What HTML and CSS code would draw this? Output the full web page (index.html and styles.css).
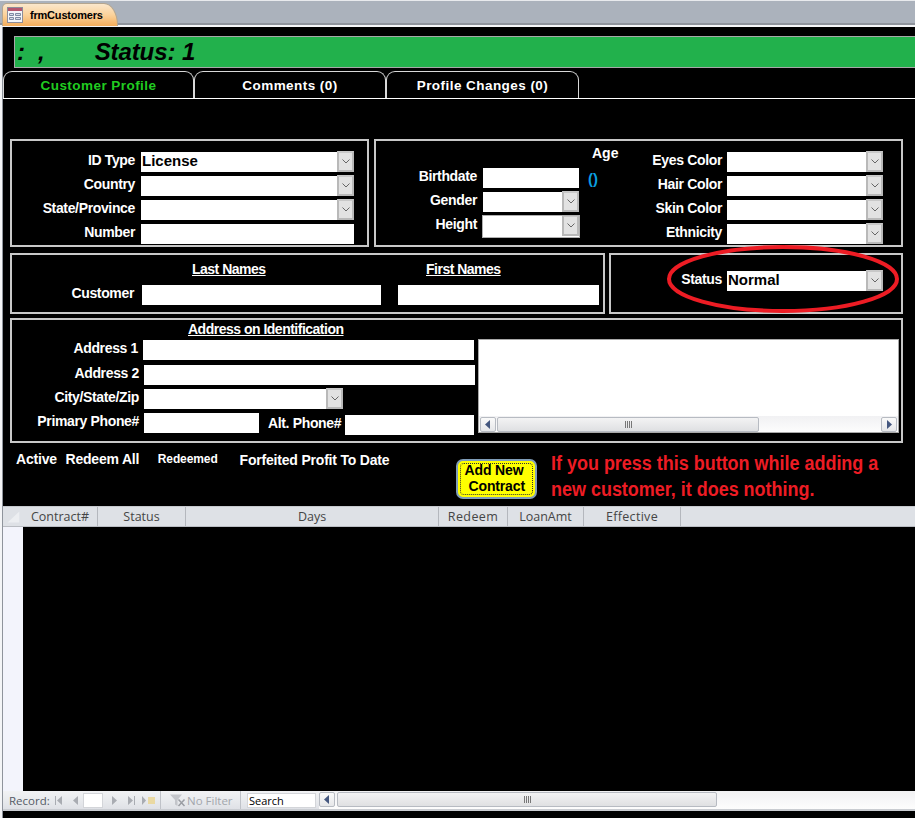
FILE: index.html
```html
<!DOCTYPE html>
<html lang="en">
<head>
<meta charset="utf-8">
<title>frmCustomers</title>
<link rel="stylesheet" href="styles.css">
</head>
<body>
<div class="doc-bar">
  <div class="doc-tab">
    <svg class="doc-icon" viewBox="0 0 16 16"><rect x=".5" y=".5" width="15" height="15" fill="#f4f6fa" stroke="#8d8d9a"/><rect x="1" y="1" width="14" height="3" fill="#b4566e"/><path d="M2.500 6.500h4v2h-4zM2.500 10.500h4v2h-4zM8.500 6.500h5v2h-5zM8.500 10.500h5v2h-5z" fill="#d7dde8" stroke="#7d8ba3"/></svg>
    <span>frmCustomers</span>
  </div>
</div>
<main class="form">
  <div class="title-bar"><span>:</span><span class="title-comma">,</span><span class="title-status">Status: 1</span></div>
  <nav class="tabs">
    <div class="tab tab-active">Customer Profile</div>
    <div class="tab">Comments (0)</div>
    <div class="tab tab-last">Profile Changes (0)</div>
  </nav>

  <div class="panel-row row-one">
    <section class="panel panel-id">
      <div class="field"><label class="lbl w-id">ID Type</label><div class="combo w-idc"><span class="val">License</span><i class="drop"><svg viewBox="0 0 8 5"><path d="M.5.500l3.500 3.500 3.500-3.500"/></svg></i></div></div>
      <div class="field"><label class="lbl w-id">Country</label><div class="combo w-idc"><span class="val"></span><i class="drop"><svg viewBox="0 0 8 5"><path d="M.5.500l3.500 3.500 3.500-3.500"/></svg></i></div></div>
      <div class="field"><label class="lbl w-id">State/Province</label><div class="combo w-idc"><span class="val"></span><i class="drop"><svg viewBox="0 0 8 5"><path d="M.5.500l3.500 3.500 3.500-3.500"/></svg></i></div></div>
      <div class="field"><label class="lbl w-id">Number</label><div class="box w-idc"></div></div>
    </section>
    <section class="panel panel-bio">
      <div class="bio-col">
        <div class="field"><label class="lbl w-bio">Birthdate</label><div class="box w-bioc"></div></div>
        <div class="field"><label class="lbl w-bio">Gender</label><div class="combo w-bioc"><span class="val"></span><i class="drop"><svg viewBox="0 0 8 5"><path d="M.5.500l3.500 3.500 3.500-3.500"/></svg></i></div></div>
        <div class="field"><label class="lbl w-bio">Height</label><div class="combo w-bioc combo-focus"><span class="val"></span><i class="drop"><svg viewBox="0 0 8 5"><path d="M.5.500l3.500 3.500 3.500-3.500"/></svg></i></div></div>
      </div>
      <div class="age-col">
        <div class="age">Age</div>
        <div class="parens">()</div>
      </div>
      <div class="look-col">
        <div class="field"><label class="lbl w-look">Eyes Color</label><div class="combo w-lookc"><span class="val"></span><i class="drop"><svg viewBox="0 0 8 5"><path d="M.5.500l3.500 3.500 3.500-3.500"/></svg></i></div></div>
        <div class="field"><label class="lbl w-look">Hair Color</label><div class="combo w-lookc"><span class="val"></span><i class="drop"><svg viewBox="0 0 8 5"><path d="M.5.500l3.500 3.500 3.500-3.500"/></svg></i></div></div>
        <div class="field"><label class="lbl w-look">Skin Color</label><div class="combo w-lookc"><span class="val"></span><i class="drop"><svg viewBox="0 0 8 5"><path d="M.5.500l3.500 3.500 3.500-3.500"/></svg></i></div></div>
        <div class="field"><label class="lbl w-look">Ethnicity</label><div class="combo w-lookc"><span class="val"></span><i class="drop"><svg viewBox="0 0 8 5"><path d="M.5.500l3.500 3.500 3.500-3.500"/></svg></i></div></div>
      </div>
    </section>
  </div>

  <div class="panel-row row-two">
    <section class="panel panel-name">
      <div class="name-grid">
        <span></span>
        <h3 class="head head-last">Last Names</h3>
        <h3 class="head head-first">First Names</h3>
        <label class="lbl">Customer</label>
        <div class="box"></div>
        <div class="box"></div>
      </div>
    </section>
    <section class="panel panel-status">
      <div class="field"><label class="lbl w-status">Status</label><div class="combo w-lookc"><span class="val">Normal</span><i class="drop"><svg viewBox="0 0 8 5"><path d="M.5.500l3.500 3.500 3.500-3.500"/></svg></i></div></div>
      <svg class="ring" viewBox="0 0 236 72"><ellipse cx="117" cy="34" rx="114" ry="32"/></svg>
    </section>
  </div>

  <section class="panel panel-address">
    <div class="addr-left">
      <h3 class="head head-addr">Address on Identification</h3>
      <div class="field addr-1"><label class="lbl w-addr1">Address 1</label><div class="box w-addrc"></div></div>
      <div class="field addr-2"><label class="lbl w-addr2">Address 2</label><div class="box w-addrc"></div></div>
      <div class="field addr-3"><label class="lbl w-addr2">City/State/Zip</label><div class="combo w-city"><span class="val"></span><i class="drop"><svg viewBox="0 0 8 5"><path d="M.5.500l3.500 3.500 3.500-3.500"/></svg></i></div></div>
      <div class="field addr-4">
        <label class="lbl w-addr2">Primary Phone#</label><div class="box w-phone"></div>
        <label class="lbl alt-lbl">Alt. Phone#</label><div class="box w-alt"></div>
      </div>
    </div>
    <div class="memo">
      <div class="memo-body"></div>
      <div class="hscroll memo-scroll">
        <i class="sb-btn"><svg viewBox="0 0 6 9"><path d="M5 0v9L0 4.500z"/></svg></i>
        <div class="sb-thumb memo-thumb"><svg viewBox="0 0 7 7"><path d="M.5 0v7M2.500 0v7M4.500 0v7M6.500 0v7"/></svg></div>
        <span class="sb-track"></span>
        <i class="sb-btn"><svg viewBox="0 0 6 9"><path d="M1 0v9l5-4.500z"/></svg></i>
      </div>
    </div>
  </section>

  <div class="action-row">
    <div class="stat-active">Active</div>
    <div class="stat-redeem">Redeem All</div>
    <div class="stat-redeemed">Redeemed</div>
    <div class="stat-forfeit">Forfeited</div>
    <div class="stat-profit">Profit To Date</div>
    <button class="add-btn"><span class="add-inner"><span class="add-l1">Add New</span><span class="add-l2">Contract</span></span></button>
    <p class="warning">If you press this button while adding a<br>new customer, it does nothing.</p>
  </div>

  <section class="sheet">
    <div class="sheet-head">
      <div class="sel-corner"><svg viewBox="0 0 20 21"><path d="M4 17L17 5v12z"/></svg></div>
      <div class="col c-contract">Contract#</div>
      <div class="col c-status">Status</div>
      <div class="col c-days">Days</div>
      <div class="col c-redeem">Redeem</div>
      <div class="col c-loan">LoanAmt</div>
      <div class="col c-eff">Effective</div>
    </div>
    <div class="sheet-body"><div class="sel-col"></div></div>
    <div class="nav-bar">
      <span class="rec-label">Record:</span>
      <svg class="nav-ic ic-first" viewBox="0 0 7 9"><path d="M0 0h1v9H0zM7 0v9L2 4.500z"/></svg>
      <svg class="nav-ic ic-prev" viewBox="0 0 5 9"><path d="M5 0v9L0 4.500z"/></svg>
      <span class="rec-box"></span>
      <svg class="nav-ic ic-next" viewBox="0 0 5 9"><path d="M0 0v9l5-4.500z"/></svg>
      <svg class="nav-ic ic-last" viewBox="0 0 7 9"><path d="M0 0v9l5-4.500zM6 0h1v9H6z"/></svg>
      <svg class="nav-ic ic-new" viewBox="0 0 13 9"><path d="M0 0v9l4-4.500z"/><path class="spark" d="M6 1h7v7H6z"/></svg>
      <span class="nav-sep sep-one"></span>
      <svg class="filter-ic" viewBox="0 0 17 13"><path d="M0 .5h12L7.500 6v6L5 10.500V6z"/><path class="filter-x" d="M8.500 5.500l6 6.500M14.500 5.500l-6 6.500"/></svg>
      <span class="no-filter">No Filter</span>
      <span class="nav-sep sep-two"></span>
      <span class="search">Search</span>
      <div class="hscroll nav-scroll">
        <i class="sb-btn"><svg viewBox="0 0 6 9"><path d="M5 0v9L0 4.500z"/></svg></i>
        <div class="sb-thumb nav-thumb"><svg viewBox="0 0 7 7"><path d="M.5 0v7M2.500 0v7M4.500 0v7M6.500 0v7"/></svg></div>
        <span class="sb-track"></span>
      </div>
    </div>
  </section>
</main>
</body>
</html>
```
FILE: styles.css
```css
* { box-sizing: border-box; }
html, body { margin: 0; padding: 0; }
body {
  width: 915px; height: 818px; overflow: hidden;
  background: #f4f5f7;
  font-family: "Liberation Sans", Arial, sans-serif;
  font-size: 14px; color: #fff;
}

/* document tab strip */
.doc-bar {
  height: 25px; padding: 2px 0 0 2px;
  background: #abb2bc; border-top: 1px solid #e8eaed; border-bottom: 2px solid #8f949c;
}
.doc-tab {
  width: 116px; height: 23px; padding-left: 4px;
  display: flex; align-items: center; gap: 7px;
  background: linear-gradient(#fbe7cc, #fbd29a 50%, #f5ad5b);
  border: 1px solid #b5a68f; border-bottom: 0;
  border-radius: 5px 14px 0 0 / 5px 22px 0 0;
  color: #000; font: bold 11px "Liberation Sans", Arial, sans-serif; letter-spacing: -.2px;
}
.doc-icon { width: 16px; height: 16px; }

/* form canvas */
.form {
  margin: 2px 0 0 3px; width: 912px; height: 791px;
  background: #000; border-left: 0;
  display: flex; flex-direction: column;
  box-shadow: -1px 0 0 #8f949c;
}
.title-bar {
  margin: 9px 0 0 11px; height: 32px; flex: none;
  background: #22b14c; border: 1px solid #a8a8a8; border-right: 0;
  padding-left: 2px; display: flex; align-items: center;
  color: #000; font: italic bold 24px/30px "Liberation Sans", Arial, sans-serif;
}
.title-comma { margin-left: 13px; }
.title-status { margin-left: 50px; letter-spacing: -.1px; }

.tabs {
  display: flex; flex: none; height: 28px; margin-top: 3px;
  border-bottom: 1px solid #fff;
}
.tab {
  width: 192px; height: 27px;
  border: 1px solid #d8d8d8; border-bottom: 0; border-radius: 9px 9px 0 0;
  display: flex; align-items: center; justify-content: center;
  font: bold 13.500px "Liberation Sans", Arial, sans-serif; letter-spacing: .45px;
}
.tab:first-child { width: 191px; }
.tab-last { width: 193px; }
.tab-active { color: #20cc20; }

/* panels */
.panel-row { display: flex; flex: none; margin-left: 7px; }
.row-one { margin-top: 40px; gap: 5px; height: 108px; }
.row-two { margin-top: 6px; gap: 4px; height: 61px; }
.panel { border: 2px solid #c8c8c8; position: relative; }
.panel-id { width: 359px; padding: 11px 0 0 0; }
.panel-bio { width: 529px; display: flex; }
.panel-name { width: 595px; padding: 6px 0 0 0; }
.panel-status { width: 294px; padding: 16px 0 0 0; }
.panel-address {
  flex: none; width: 893px; height: 125px; margin: 4px 0 0 7px;
  display: flex;
}

.field { display: flex; height: 20px; margin-bottom: 4px; }
.lbl {
  display: block; text-align: right; font-weight: bold;
  font-size: 14px; line-height: 16px; white-space: nowrap; letter-spacing: -.35px;
}
.box { height: 20px; background: #fff; }
.combo { height: 20px; background: #fff; display: flex; }
.val {
  flex: 1; color: #000; font-weight: bold; font-size: 15px;
  line-height: 18px; padding-left: 1px;
}
.drop {
  width: 17px; height: 21px; margin-top: -1px; flex: none;
  background: #e2e2e2; border: 2px solid #b9b9b9; border-top-color: #c8c8c8;
  display: flex; align-items: center; justify-content: center;
}
.drop svg { width: 8px; height: 5px; fill: none; stroke: #666; stroke-width: 1; }

.w-id { width: 123px; margin-right: 6px; }
.w-idc { width: 213px; }
.bio-col { width: 205px; padding-top: 27px; }
.w-bio { width: 101px; margin-right: 6px; }
.w-bioc { width: 96px; }
.combo-focus { outline: 1px solid #b0b0b0; outline-offset: 0; height: 21px; }
.age-col { width: 60px; }
.age { margin: 4px 0 0 11px; font-weight: bold; font-size: 14px; line-height: 16px; }
.parens { margin: 9px 0 0 7px; font-weight: bold; font-size: 15px; line-height: 18px; color: #0a9ee0; }
.look-col { padding-top: 11px; margin-left: 0; }
.w-look { width: 81px; margin-right: 5px; }
.w-lookc { width: 156px; }

.name-grid {
  display: grid; grid-template-columns: 122px 239px 201px; column-gap: 8px;
  grid-template-rows: 16px 20px; row-gap: 8px;
}
.name-grid .box:last-child { margin-left: 9px; width: 201px; }
.head {
  margin: 0; font-size: 14px; line-height: 16px; font-weight: bold;
  text-decoration: underline; white-space: nowrap; letter-spacing: -.5px;
}
.head-last { padding-left: 50px; }
.head-first { padding-left: 37px; }
.w-status { width: 111px; margin-right: 5px; }
.ring {
  position: absolute; left: 55px; top: -10px; width: 236px; height: 72px;
  fill: none; stroke: #ed1c24; stroke-width: 4;
}

.addr-left { width: 464px; padding-top: 1px; flex: none; }
.head-addr { padding-left: 176px; }
.addr-1 { margin: 3px 0 5px; }
.addr-2 { margin-bottom: 4px; }
.addr-3 { margin-bottom: 4px; }
.addr-4 { margin-bottom: 0; }
.w-addr1 { width: 126px; margin-right: 5px; }
.w-addr2 { width: 127px; margin-right: 5px; }
.w-addrc { width: 331px; }
.w-city { width: 199px; }
.w-phone { width: 115px; }
.alt-lbl { margin: 2px 4px 0 9px; }
.w-alt { width: 129px; margin-top: 2px; }
.memo {
  width: 421px; height: 94px; margin: 19px 0 0 2px;
  border: 1px solid #a8a8a8; background: #fff; display: flex; flex-direction: column;
}
.memo-body { flex: 1; }

.hscroll {
  display: flex; align-items: center; gap: 1px;
  background: linear-gradient(#f1f1f3, #fdfdfd);
}
.memo-scroll { height: 16px; padding: 0 1px; }
.sb-btn {
  width: 16px; height: 15px; flex: none;
  background: linear-gradient(#fafafa, #e6e7e9);
  border: 1px solid #b7bbc2; border-radius: 2px;
  display: flex; align-items: center; justify-content: center;
}
.sb-btn svg { width: 6px; height: 9px; fill: #44577f; }
.sb-thumb {
  height: 15px; flex: none;
  background: linear-gradient(#f3f3f4, #dfe0e2);
  border: 1px solid #b7bbc2; border-radius: 2px;
  display: flex; align-items: center; justify-content: center;
}
.sb-thumb svg { width: 7px; height: 7px; fill: none; stroke: #777; stroke-width: 1; }
.memo-thumb { width: 262px; }
.sb-track { flex: 1; }

/* action row */
.action-row {
  flex: none; height: 63px; display: flex;
  font-weight: bold; font-size: 14px; line-height: 16px; letter-spacing: -.2px;
}
.stat-active { margin: 8px 0 0 13px; width: 52px; }
.stat-redeem { margin-top: 8px; width: 97px; }
.stat-redeemed { margin-top: 8px; width: 86px; font-size: 12px; letter-spacing: -.1px; }
.stat-forfeit { margin-top: 9px; width: 65px; }
.stat-profit { margin-top: 9px; width: 162px; }
.add-btn {
  width: 81px; height: 40px; margin: 16px 0 0 0; padding: 2px; flex: none;
  background: #ffff00; border: 2px solid #7f9db9; border-radius: 7px;
  font: bold 14px/16px "Liberation Sans", Arial, sans-serif; color: #000; letter-spacing: -.15px;
}
.add-inner {
  display: block; height: 100%; border: 1px dotted #333; border-radius: 4px;
  text-align: left;
}
.add-l1 { display: block; padding-left: 4px; margin-top: -2px; }
.add-l2 { display: block; padding-left: 8px; }
.warning {
  margin: 7px 0 0 14px; color: #ed1c24; font-size: 20px; line-height: 26px;
  white-space: nowrap; font-weight: bold; letter-spacing: 0;
  transform: scaleX(.898); transform-origin: left top;
}

/* datasheet */
.sheet { flex: 1; display: flex; flex-direction: column; min-height: 0; }
.sheet-head {
  height: 21px; flex: none; display: flex;
  background: #dee1e6; border-bottom: 1px solid #b9bcc2; border-top: 1px solid #c6c9ce;
  font: 12.500px/19px "Open Sans", sans-serif; color: #454545;
  font-variant-ligatures: none;
}
.sel-corner { width: 20px; flex: none; }
.sel-corner svg { display: block; width: 20px; height: 19px; fill: #eceef1; }
.col { text-align: center; border-right: 1px solid #b4b7bd; flex: none; }
.c-contract { width: 75px; }
.c-status { width: 88px; }
.c-days { width: 253px; }
.c-redeem { width: 69px; letter-spacing: .4px; }
.c-loan { width: 76px; }
.c-eff { width: 97px; letter-spacing: .3px; }
.sheet-body { height: 264px; flex: none; }
.sel-col { width: 20px; height: 100%; background: #f3f4fc; }

.nav-bar {
  height: 20px; flex: none; display: flex; align-items: center;
  background: linear-gradient(#f1f2f4, #e8eaed 55%, #dfe1e6);
  border-bottom: 2px solid #c9ccd1;
  font: 11.500px "Open Sans", sans-serif; color: #555b66;
}
.rec-label { margin-left: 6px; width: 46px; flex: none; }
.nav-ic { height: 9px; flex: none; fill: #a9acb2; }
.ic-first { width: 7px; }
.ic-prev { width: 5px; margin-left: 11px; }
.rec-box { width: 20px; height: 15px; margin-left: 5px; background: #fff; border: 1px solid #d3d5d9; flex: none; }
.ic-next { width: 5px; margin-left: 9px; }
.ic-last { width: 7px; margin-left: 11px; }
.ic-new { width: 13px; margin-left: 7px; }
.ic-new .spark { fill: #ead9a2; }
.nav-sep { width: 1px; height: 18px; background: #bfc2c8; flex: none; }
.sep-one { margin-left: 5px; }
.filter-ic { width: 17px; height: 13px; margin-left: 9px; fill: #c3c5ca; flex: none; }
.filter-x { fill: none; stroke: #9a9da3; stroke-width: 1.500; }
.no-filter { width: 44px; margin-left: 0; color: #a3a6ac; flex: none; white-space: nowrap; }
.sep-two { margin-left: 9px; }
.search {
  width: 69px; height: 15px; margin-left: 6px; padding-left: 1px; flex: none;
  background: #fff; border: 1px solid #d3d5d9; color: #000;
  font: 11px/13px "Open Sans", sans-serif;
}
.nav-scroll { flex: 1; height: 18px; margin-left: 3px; margin-top: -1px; gap: 2px; }
.nav-thumb { width: 380px; }
```
